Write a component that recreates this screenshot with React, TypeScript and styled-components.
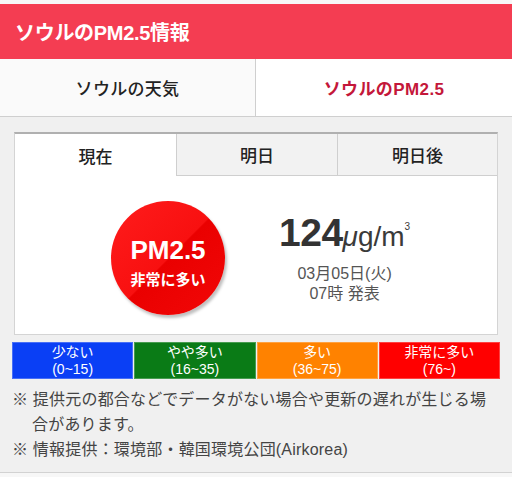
import React from 'react';
import styled, { createGlobalStyle } from 'styled-components';

const FONT = '"Liberation Sans", "Noto Sans CJK JP", sans-serif';

const GlobalStyle = createGlobalStyle`
  html, body {
    margin: 0;
    padding: 0;
    background: #f7f7f7;
  }
  body {
    font-family: ${FONT};
    -webkit-font-smoothing: antialiased;
  }
`;

const Page = styled.div`
  width: 512px;
  padding-top: 4px;
`;

const Header = styled.h1`
  margin: 0;
  height: 55px;
  display: flex;
  align-items: center;
  padding-left: 15px;
  background: #f43d52;
  color: #fff;
  font-size: 20px;
  font-weight: 700;
  letter-spacing: -0.3px;
`;

const Nav = styled.nav`
  display: grid;
  grid-template-columns: 1fr 1fr;
  height: 57px;
  border-bottom: 1px solid #cfcfcf;
`;

type NavItemProps = {
  $active?: boolean;
};

const NavItem = styled.div<NavItemProps>`
  display: flex;
  align-items: center;
  justify-content: center;
  font-size: 17px;
  font-weight: ${({ $active }) => ($active ? 700 : 500)};
  letter-spacing: ${({ $active }) => ($active ? '0.4px' : '0.3px')};
  color: ${({ $active }) => ($active ? '#c4173a' : '#222')};
  background: ${({ $active }) => ($active ? '#fff' : '#fafafa')};
  border-right: ${({ $active }) => ($active ? 'none' : '1px solid #cfcfcf')};
`;

const Main = styled.main`
  background: #f0f0f0;
  padding: 15px 12px 10px;
  border-bottom: 1px solid #d2d2d2;
`;

const Card = styled.section`
  margin: 0 2px;
  background: #fff;
  border: 1px solid #d4d4d4;
  border-top: 2px solid #b0b0b0;
`;

const Tabs = styled.div`
  display: grid;
  grid-template-columns: 161px 161px 1fr;
  height: 42px;
`;

type TabProps = {
  $active?: boolean;
};

const Tab = styled.div<TabProps>`
  display: flex;
  align-items: center;
  justify-content: center;
  font-size: 17px;
  font-weight: 500;
  color: #222;
  background: ${({ $active }) => ($active ? '#fff' : '#f2f2f2')};
  border-bottom: ${({ $active }) => ($active ? 'none' : '1px solid #cfcfcf')};
  & + & {
    border-left: 1px solid #cfcfcf;
  }
`;

const Body = styled.div`
  display: flex;
  align-items: center;
  gap: 54px;
  height: 158px;
  padding-left: 96px;
  padding-top: 6px;
  box-sizing: border-box;
`;

const Badge = styled.div`
  width: 114px;
  height: 114px;
  border-radius: 50%;
  background: linear-gradient(135deg, #ff1c1c 0%, #f81010 50%, #ea0000 51%, #f20808 100%);
  box-shadow: 2px 3px 3px rgba(0, 0, 0, 0.25);
  color: #fff;
  display: flex;
  flex-direction: column;
  align-items: center;
  justify-content: center;
  padding-top: 8px;
  box-sizing: border-box;
`;

const BadgeTitle = styled.div`
  font-size: 26px;
  font-weight: 700;
  line-height: 30px;
`;

const BadgeLevel = styled.div`
  margin-top: 6px;
  font-size: 15px;
  font-weight: 700;
  line-height: 18px;
`;

const Reading = styled.div`
  display: flex;
  flex-direction: column;
  align-items: center;
  color: #333;
  padding-bottom: 8px;
`;

const Value = styled.div`
  display: flex;
  align-items: baseline;
  line-height: 44px;
`;

const Number = styled.span`
  font-size: 39px;
  font-weight: 700;
  letter-spacing: -0.5px;
`;

const Unit = styled.span`
  font-size: 28px;
  font-weight: 300;
  color: #3a3a3a;
  font-family: "Liberation Sans", sans-serif;
`;

const Mu = styled.span`
  font-style: italic;
`;

const Cube = styled.sup`
  font-size: 10px;
  margin-left: 0;
  vertical-align: 16px;
`;

const Issued = styled.div`
  margin-top: 5px;
  font-size: 16px;
  line-height: 20px;
  color: #555;
  text-align: center;
`;

const Legend = styled.div`
  display: grid;
  grid-template-columns: repeat(4, 1fr);
  gap: 1px;
  margin-top: 7px;
  background: #f0f0f0;
`;

type LevelProps = {
  $color: string;
};

const Level = styled.div<LevelProps>`
  height: 37px;
  background: ${({ $color }) => $color};
  border: 1px solid rgba(255, 255, 255, 0.25);
  box-sizing: border-box;
  color: #fff;
  font-size: 14px;
  line-height: 17px;
  text-align: center;
  padding-top: 1px;
`;

const Notes = styled.ul`
  list-style: none;
  margin: 8px 0 0;
  padding: 0;
  font-size: 16px;
  line-height: 25px;
  letter-spacing: 0.2px;
  color: #444;
`;

const Note = styled.li`
  padding-left: 20px;
  text-indent: -20px;
`;

const levels = [
  { label: '少ない', range: '(0~15)', color: '#0a3ff5' },
  { label: 'やや多い', range: '(16~35)', color: '#0a7b16' },
  { label: '多い', range: '(36~75)', color: '#ff8200' },
  { label: '非常に多い', range: '(76~)', color: '#ff0000' },
];

export default function App() {
  return (
    <Page>
      <GlobalStyle />
      <Header>ソウルのPM2.5情報</Header>
      <Nav>
        <NavItem>ソウルの天気</NavItem>
        <NavItem $active>ソウルのPM2.5</NavItem>
      </Nav>
      <Main>
        <Card>
          <Tabs>
            <Tab $active>現在</Tab>
            <Tab>明日</Tab>
            <Tab>明日後</Tab>
          </Tabs>
          <Body>
            <Badge>
              <BadgeTitle>PM2.5</BadgeTitle>
              <BadgeLevel>非常に多い</BadgeLevel>
            </Badge>
            <Reading>
              <Value>
                <Number>124</Number>
                <Unit>
                  <Mu>μ</Mu>g/m<Cube>3</Cube>
                </Unit>
              </Value>
              <Issued>
                03月05日(火)
                <br />
                07時 発表
              </Issued>
            </Reading>
          </Body>
        </Card>
        <Legend>
          {levels.map((l) => (
            <Level key={l.label} $color={l.color}>
              {l.label}
              <br />
              {l.range}
            </Level>
          ))}
        </Legend>
        <Notes>
          <Note>※ 提供元の都合などでデータがない場合や更新の遅れが生じる場合があります。</Note>
          <Note>※ 情報提供：環境部・韓国環境公団(Airkorea)</Note>
        </Notes>
      </Main>
    </Page>
  );
}
